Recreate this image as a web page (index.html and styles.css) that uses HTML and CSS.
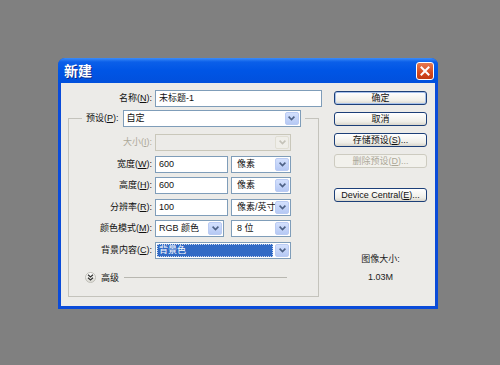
FILE: index.html
```html
<!DOCTYPE html>
<html lang="zh-CN">
<head>
  <meta charset="UTF-8">
  <meta name="viewport" content="width=device-width, initial-scale=1.0">
  <title>新建</title>
  <link rel="stylesheet" href="styles.css">
</head>
<body>
  <!-- New document dialog -->
  <div class="window">
    <div class="titlebar">
      <span class="title">新建</span>
      <span class="close">
        <svg width="10" height="10" viewBox="0 0 10 10"><path d="M1.5 1.5L8.5 8.5M8.5 1.5L1.5 8.5" stroke="#fff" stroke-width="2" stroke-linecap="square"/></svg>
      </span>
    </div>

    <div class="client">
      <div class="form">
        <div class="name-row">
          <label class="lbl name-lbl">名称(<u>N</u>):</label>
          <div class="field name-field">未标题-1</div>
        </div>

        <fieldset class="group">
          <legend class="preset">
            <label class="lbl">预设(<u>P</u>):</label>
            <div class="select preset-select">
              <span class="value">自定</span>
              <span class="drop"><svg width="7" height="5" viewBox="0 0 7 5"><path d="M0.6 0.6L3.5 3.5L6.4 0.6" fill="none" stroke="#4d6185" stroke-width="1.6"/></svg></span>
            </div>
          </legend>

          <div class="grid">
            <label class="lbl off">大小(<u>I</u>):</label>
            <div class="select span2 off">
              <span class="value"></span>
              <span class="drop"><svg width="7" height="5" viewBox="0 0 7 5"><path d="M0.6 0.6L3.5 3.5L6.4 0.6" fill="none" stroke="#c4c2b8" stroke-width="1.6"/></svg></span>
            </div>

            <label class="lbl">宽度(<u>W</u>):</label>
            <div class="field">600</div>
            <div class="select unit">
              <span class="value">像素</span>
              <span class="drop"><svg width="7" height="5" viewBox="0 0 7 5"><path d="M0.6 0.6L3.5 3.5L6.4 0.6" fill="none" stroke="#4d6185" stroke-width="1.6"/></svg></span>
            </div>

            <label class="lbl">高度(<u>H</u>):</label>
            <div class="field">600</div>
            <div class="select unit">
              <span class="value">像素</span>
              <span class="drop"><svg width="7" height="5" viewBox="0 0 7 5"><path d="M0.6 0.6L3.5 3.5L6.4 0.6" fill="none" stroke="#4d6185" stroke-width="1.6"/></svg></span>
            </div>

            <label class="lbl">分辨率(<u>R</u>):</label>
            <div class="field">100</div>
            <div class="select unit">
              <span class="value">像素/英寸</span>
              <span class="drop"><svg width="7" height="5" viewBox="0 0 7 5"><path d="M0.6 0.6L3.5 3.5L6.4 0.6" fill="none" stroke="#4d6185" stroke-width="1.6"/></svg></span>
            </div>

            <label class="lbl">颜色模式(<u>M</u>):</label>
            <div class="select mode">
              <span class="value">RGB 颜色</span>
              <span class="drop"><svg width="7" height="5" viewBox="0 0 7 5"><path d="M0.6 0.6L3.5 3.5L6.4 0.6" fill="none" stroke="#4d6185" stroke-width="1.6"/></svg></span>
            </div>
            <div class="select unit">
              <span class="value">8 位</span>
              <span class="drop"><svg width="7" height="5" viewBox="0 0 7 5"><path d="M0.6 0.6L3.5 3.5L6.4 0.6" fill="none" stroke="#4d6185" stroke-width="1.6"/></svg></span>
            </div>

            <label class="lbl">背景内容(<u>C</u>):</label>
            <div class="select span2">
              <span class="value hl">背景色</span>
              <span class="drop"><svg width="7" height="5" viewBox="0 0 7 5"><path d="M0.6 0.6L3.5 3.5L6.4 0.6" fill="none" stroke="#4d6185" stroke-width="1.6"/></svg></span>
            </div>
          </div>

          <div class="advanced">
            <span class="toggle"><svg width="7" height="7" viewBox="0 0 7 7"><path d="M1 0.8L3.5 3L6 0.8M1 3.8L3.5 6L6 3.8" fill="none" stroke="#333" stroke-width="1.2"/></svg></span>
            <span class="adv-text">高级</span>
            <span class="rule"></span>
          </div>
        </fieldset>
      </div>

      <div class="side">
        <div class="btn default">确定</div>
        <div class="btn">取消</div>
        <div class="btn">存储预设(<u>S</u>)...</div>
        <div class="btn off">删除预设(<u>D</u>)...</div>
        <div class="btn central">Device Central(<u>E</u>)...</div>

        <div class="info">
          <div>图像大小:</div>
          <div class="size">1.03M</div>
        </div>
      </div>
    </div>
  </div>
</body>
</html>
```

FILE: styles.css
```css
body {
  margin: 0;
  padding: 58px 0 0 58px;
  background: #808080;
  font-family: "Liberation Sans", "Noto Sans CJK SC", sans-serif;
  font-size: 9px;
  color: #111;
  min-height: 100vh;
  box-sizing: border-box;
}

/* Window frame */
.window {
  width: 380px;
  background: #0a4bd9;
  border-radius: 7px 7px 0 0;
  padding: 0 3px 3px;
  box-sizing: border-box;
}

.titlebar {
  height: 25px;
  margin: 0 -3px;
  padding: 0 4px 0 6px;
  display: flex;
  align-items: center;
  border-radius: 7px 7px 0 0;
  background: linear-gradient(#3c8cf8 0, #0b5fe9 4px, #0055e5 50%, #0150dc 100%);
}

.title {
  font-size: 14px;
  font-weight: bold;
  color: #fff;
  font-family: "Noto Sans CJK SC", sans-serif;
  text-shadow: 1px 1px 0 #0a2a8c;
  line-height: 25px;
}

.close {
  margin-left: auto;
  width: 18px;
  height: 18px;
  box-sizing: border-box;
  border: 1px solid #fff;
  border-radius: 3px;
  background: linear-gradient(#e87a50, #d5491f 60%, #c23a12);
  display: flex;
  align-items: center;
  justify-content: center;
}

/* Client area */
.client {
  background: #ecebe8;
  display: flex;
  padding: 7px 0 9px;
  gap: 12px;
}

.form {
  width: 261px;
}

.lbl {
  text-align: right;
  white-space: nowrap;
  line-height: 17px;
}

.lbl u {
  text-decoration: underline;
}

.off {
  color: #aca899;
}

.name-row {
  display: flex;
  gap: 3px;
  height: 17px;
}

.name-lbl {
  width: 91px;
}

.field {
  height: 17px;
  box-sizing: border-box;
  border: 1px solid #7f9db9;
  background: #fff;
  padding-left: 3px;
  line-height: 15px;
}

.name-field {
  width: 167px;
}

/* Selects */
.select {
  height: 17px;
  box-sizing: border-box;
  border: 1px solid #7f9db9;
  background: #fff;
  display: flex;
  padding: 1px;
  line-height: 13px;
}

.select .value {
  flex: 1;
  padding-left: 2px;
  white-space: nowrap;
  overflow: hidden;
}

.unit .value {
  padding-left: 4px;
}

.select .hl {
  background: #316ac5;
  color: #fff;
  outline: 1px dotted #c9d6ee;
  outline-offset: -1px;
  margin-right: 2px;
}

.drop {
  width: 14px;
  height: 13px;
  box-sizing: border-box;
  border: 1px solid #bacbf3;
  border-radius: 2px;
  background: linear-gradient(#d3e0fd, #b6c9f4);
  display: flex;
  align-items: center;
  justify-content: center;
}

.select.off {
  border-color: #c9c7ba;
  background: #ecebe8;
}

.select.off .drop {
  border-color: #e0ded3;
  background: #efeee9;
}

/* Group box */
.group {
  margin: 3px 0 0 7px;
  padding: 0;
  width: 251px;
  box-sizing: border-box;
  border: 1px solid #c4c3bc;
  min-width: 0;
}

.preset {
  margin-left: 13px;
  padding: 0 4px;
  display: flex;
  gap: 4px;
}

.preset-select {
  width: 178px;
}

.grid {
  display: grid;
  grid-template-columns: 83px 73px 60px;
  grid-auto-rows: 17px;
  column-gap: 3px;
  row-gap: 4.6px;
  padding-top: 7px;
}

.span2 {
  grid-column: span 2;
}

.mode {
  width: 69px;
}

.advanced {
  display: flex;
  align-items: center;
  height: 11px;
  margin: 13px 0 13px 16px;
}

.toggle {
  width: 11px;
  height: 11px;
  box-sizing: border-box;
  border: 1px solid #c0bfb8;
  border-radius: 50%;
  background: linear-gradient(#fff, #dcdbd4);
  display: flex;
  align-items: center;
  justify-content: center;
}

.adv-text {
  margin-left: 5px;
}

.rule {
  width: 163px;
  height: 1px;
  background: #b8b7b0;
  margin-left: 5px;
}

/* Right column */
.side {
  width: 93px;
  padding-top: 1px;
}

.btn {
  height: 14px;
  box-sizing: border-box;
  border: 1px solid #1c3f78;
  border-radius: 3px;
  background: linear-gradient(#fff, #f0efe9 70%, #d9d6cc);
  text-align: center;
  line-height: 12px;
  margin-bottom: 7px;
  white-space: nowrap;
}

.btn.default {
  box-shadow: inset 0 0 0 1px #a7c1eb;
}

.btn.off {
  border-color: #cdcbc0;
  background: #f2f1ec;
}

.btn.central {
  margin-top: 20px;
}

.info {
  margin-top: 51px;
  text-align: center;
  line-height: 12px;
  color: #222;
}

.info .size {
  margin-top: 6px;
}
```
